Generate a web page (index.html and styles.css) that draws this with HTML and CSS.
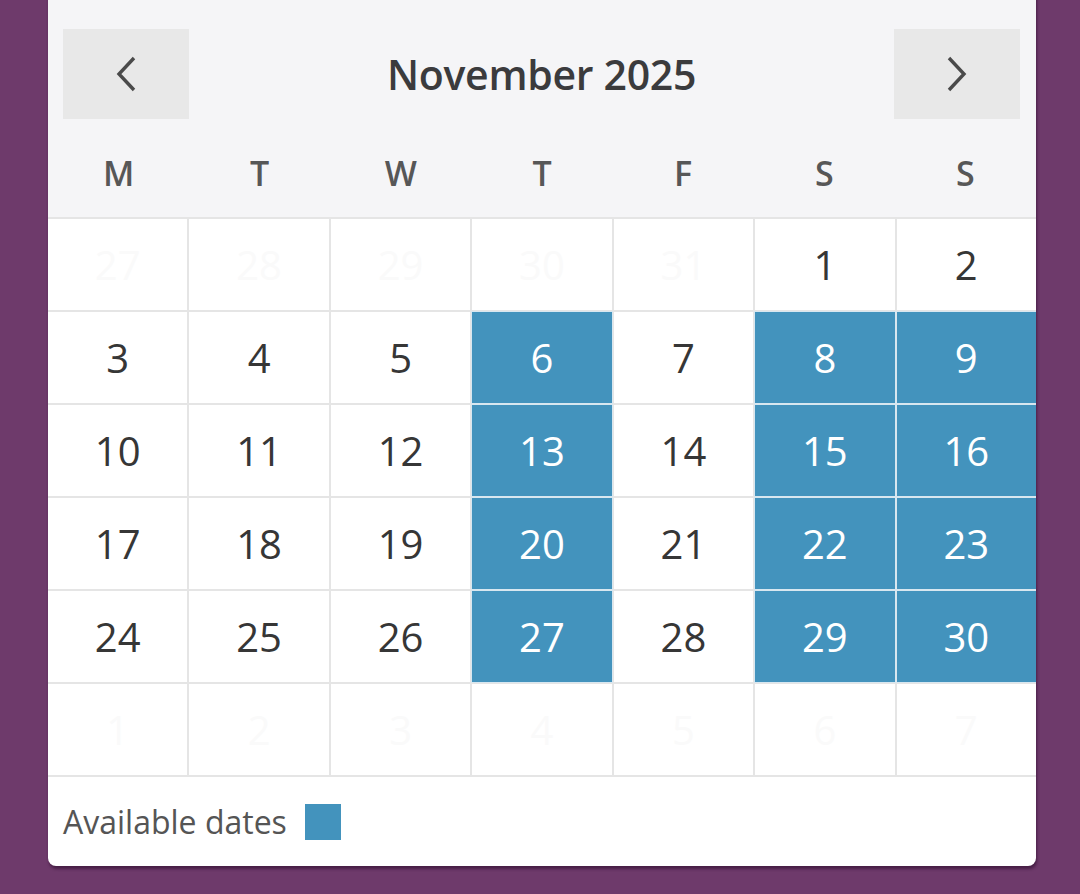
FILE: index.html
```html
<!DOCTYPE html>
<html lang="en">
<head>
<meta charset="utf-8">
<title>Calendar</title>
<link rel="stylesheet" href="styles.css">
</head>
<body>
<div class="card">
  <div class="head">
    <div class="nav">
      <button class="navbtn" aria-label="Previous month">
        <svg width="24" height="36" viewBox="0 0 24 36"><polyline points="20,2 5,18 20,34" fill="none" stroke="#4a4a4a" stroke-width="3.4"/></svg>
      </button>
      <div class="title">November 2025</div>
      <button class="navbtn" aria-label="Next month">
        <svg width="24" height="36" viewBox="0 0 24 36"><polyline points="4,2 19,18 4,34" fill="none" stroke="#4a4a4a" stroke-width="3.4"/></svg>
      </button>
    </div>
    <div class="weekdays">
      <span>M</span><span>T</span><span>W</span><span>T</span><span>F</span><span>S</span><span>S</span>
    </div>
  </div>
  <div class="grid">
    <div class="cell out">27</div><div class="cell out">28</div><div class="cell out">29</div><div class="cell out">30</div><div class="cell out">31</div><div class="cell">1</div><div class="cell">2</div>
    <div class="cell">3</div><div class="cell">4</div><div class="cell">5</div><div class="cell av">6</div><div class="cell">7</div><div class="cell av">8</div><div class="cell av">9</div>
    <div class="cell">10</div><div class="cell">11</div><div class="cell">12</div><div class="cell av">13</div><div class="cell">14</div><div class="cell av">15</div><div class="cell av">16</div>
    <div class="cell">17</div><div class="cell">18</div><div class="cell">19</div><div class="cell av">20</div><div class="cell">21</div><div class="cell av">22</div><div class="cell av">23</div>
    <div class="cell">24</div><div class="cell">25</div><div class="cell">26</div><div class="cell av">27</div><div class="cell">28</div><div class="cell av">29</div><div class="cell av">30</div>
    <div class="cell out">1</div><div class="cell out">2</div><div class="cell out">3</div><div class="cell out">4</div><div class="cell out">5</div><div class="cell out">6</div><div class="cell out">7</div>
  </div>
  <div class="legend">
    <span class="legend-text">Available dates</span>
    <span class="swatch"></span>
  </div>
</div>
</body>
</html>
```

FILE: styles.css
```css
* { box-sizing: border-box; }
html, body {
  margin: 0;
  padding: 0;
  background: #6e3a6b;
  height: 894px;
  overflow: hidden;
}
body {
  font-family: "Open Sans", "Noto Sans", sans-serif;
}
.card {
  width: 988px;
  margin: -20px 0 0 48px;
  background: #fff;
  border-radius: 8px;
  overflow: hidden;
  box-shadow: 1px 3px 3px rgba(40, 10, 40, 0.55);
}
.head {
  background: #f5f5f7;
  padding-top: 20px;
  border-bottom: 1px solid #e5e5e5;
}
.nav {
  display: flex;
  align-items: center;
  justify-content: space-between;
  padding: 29px 16px 0 15px;
}
.navbtn {
  width: 126px;
  height: 90px;
  background: #e8e8e8;
  border: 0;
  padding: 0;
  display: flex;
  align-items: center;
  justify-content: center;
}
.title {
  font-size: 41px;
  font-weight: 600;
  color: #3b3b3d;
  letter-spacing: -0.3px;
}
.weekdays {
  display: grid;
  grid-template-columns: repeat(7, 1fr);
  height: 98px;
  align-items: center;
  padding-top: 10px;
}
.weekdays span {
  text-align: center;
  font-size: 34px;
  font-weight: 600;
  color: #575757;
}
.grid {
  display: grid;
  grid-template-columns: repeat(7, 1fr);
  margin: 0 -1px;
}
.cell {
  height: 93px;
  border: 1px solid #e5e5e5;
  display: flex;
  align-items: center;
  justify-content: center;
  font-size: 40px;
  color: #363636;
}
.cell.out {
  color: #fafafa;
}
.cell.av {
  background: #4393bd;
  border-color: #d8e7f0;
  color: #fff;
}
.legend {
  border-top: 1px solid #e5e5e5;
  height: 90px;
  display: flex;
  align-items: center;
  gap: 18px;
  padding-left: 15px;
}
.legend-text {
  font-size: 32px;
  color: #555;
}
.swatch {
  width: 36px;
  height: 36px;
  background: #4393bd;
}
```
